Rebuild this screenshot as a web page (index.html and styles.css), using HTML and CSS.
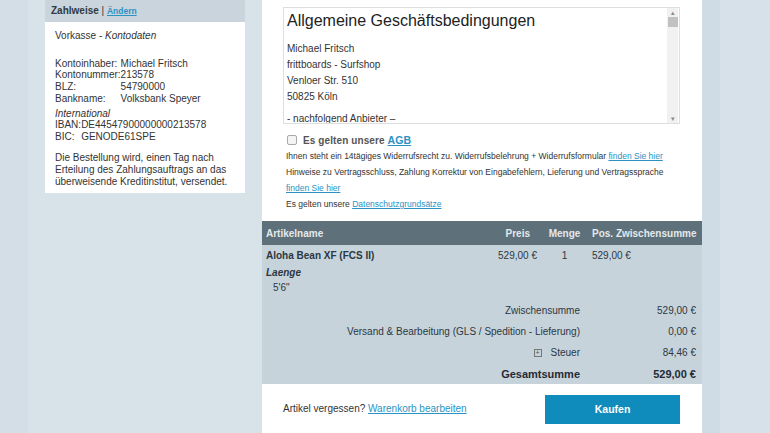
FILE: index.html
```html
<!DOCTYPE html>
<html lang="de">
<head>
<meta charset="utf-8">
<title>Kasse</title>
<link rel="stylesheet" href="styles.css">
</head>
<body>
<div class="page">
  <aside class="side">
    <div class="side-head"><b>Zahlweise</b> | <a href="#" class="small-link">Ändern</a></div>
    <div class="side-body">
      <p class="mode">Vorkasse - <i>Kontodaten</i></p>
      <table class="acct">
        <tr><td>Kontoinhaber:</td><td>Michael Fritsch</td></tr>
        <tr><td>Kontonummer:</td><td>213578</td></tr>
        <tr><td>BLZ:</td><td>54790000</td></tr>
        <tr><td>Bankname:</td><td>Volksbank Speyer</td></tr>
      </table>
      <p class="intl"><i>International</i></p>
      <table class="acct">
        <tr><td>IBAN:</td><td>DE44547900000000213578</td></tr>
        <tr><td>BIC:</td><td>GENODE61SPE</td></tr>
      </table>
      <p class="note">Die Bestellung wird, einen Tag nach Erteilung des Zahlungsauftrags an das überweisende Kreditinstitut, versendet.</p>
    </div>
  </aside>

  <main class="main">
    <section class="terms">
      <div class="agb-box">
        <div class="agb-text">
          <h1>Allgemeine Geschäftsbedingungen</h1>
          <p>Michael Fritsch<br>frittboards - Surfshop<br>Venloer Str. 510<br>50825 Köln</p>
          <p>- nachfolgend Anbieter –</p>
        </div>
        <div class="sbar">
          <span class="arr">▴</span>
          <span class="thumb"></span>
          <span class="track"></span>
          <span class="arr">▾</span>
        </div>
      </div>
      <label class="agb-check"><span class="cb"></span>Es gelten unsere <a href="#">AGB</a></label>
      <p class="info first">Ihnen steht ein 14tägiges Widerrufsrecht zu. Widerrufsbelehrung + Widerrufsformular <a href="#">finden Sie hier</a></p>
      <p class="info">Hinweise zu Vertragsschluss, Zahlung Korrektur von Eingabefehlern, Lieferung und Vertragssprache <a href="#">finden Sie hier</a></p>
      <p class="info">Es gelten unsere <a href="#">Datenschutzgrundsätze</a></p>
    </section>

    <section class="cart">
      <div class="row head">
        <span class="c-name">Artikelname</span>
        <span class="c-price">Preis</span>
        <span class="c-qty">Menge</span>
        <span class="c-sum">Pos. Zwischensumme</span>
      </div>
      <div class="row item">
        <span class="c-name"><b>Aloha Bean XF (FCS II)</b></span>
        <span class="c-price">529,00 €</span>
        <span class="c-qty">1</span>
        <span class="c-sum">529,00 €</span>
      </div>
      <div class="attr"><b><i>Laenge</i></b></div>
      <div class="attr-val">5'6"</div>
      <div class="totals">
        <div class="trow"><span class="tl">Zwischensumme</span><span class="tv">529,00 €</span></div>
        <div class="trow"><span class="tl">Versand &amp; Bearbeitung (GLS / Spedition - Lieferung)</span><span class="tv">0,00 €</span></div>
        <div class="trow"><span class="tl"><span class="plus">+</span>Steuer</span><span class="tv">84,46 €</span></div>
        <div class="trow grand"><span class="tl">Gesamtsumme</span><span class="tv">529,00 €</span></div>
      </div>
    </section>

    <section class="foot">
      <p>Artikel vergessen? <a href="#">Warenkorb bearbeiten</a></p>
      <button class="buy">Kaufen</button>
    </section>
  </main>
</div>
</body>
</html>
```

FILE: styles.css
```css
html, body {
  margin: 0;
  padding: 0;
}
body {
  width: 770px;
  height: 433px;
  overflow: hidden;
  font-family: "Liberation Sans", Arial, sans-serif;
  color: #333;
  background: linear-gradient(to right, #d3dee6 0 28px, #d8e2e9 28px 702px, #d0dce5 702px 720px, #d6e1e9 720px);
}
.page {
  display: flex;
  align-items: flex-start;
  padding-left: 45px;
  gap: 17px;
}
a { color: #2a93c4; }

/* sidebar */
.side {
  width: 200px;
  flex: none;
}
.side-head {
  background: #c9d4dc;
  height: 22px;
  line-height: 22px;
  padding-left: 6px;
  font-size: 10px;
  color: #2f3a42;
}
.small-link { font-size: 8.5px; font-weight: bold; }
.side-body {
  background: #fff;
  padding: 8px 10px 6px;
  height: 157px;
  font-size: 10px;
  line-height: 11.7px;
  color: #333;
}
.side-body p { margin: 0; }
.side-body .mode { margin-bottom: 16px; }
.acct {
  border-collapse: collapse;
  font-size: 10px;
  line-height: 11.7px;
}
.acct td { padding: 0; white-space: nowrap; }
.side-body .intl { margin-top: 3px; }
.side-body .note { margin-top: 9px; line-height: 12px; }

/* main */
.main {
  width: 440px;
  flex: none;
  background: #fff;
  height: 433px;
  display: flex;
  flex-direction: column;
}
.terms {
  padding: 7px 22px 0 21px;
  height: 214px;
}
.agb-box {
  border: 1px solid #dedede;
  height: 115px;
  display: flex;
  overflow: hidden;
}
.agb-text {
  flex: 1;
  padding: 3px 4px 0 3px;
  color: #333;
}
.agb-text h1 {
  font-size: 16px;
  font-weight: normal;
  margin: 0 0 10px;
  line-height: 20px;
  color: #222;
}
.agb-text p {
  margin: 0 0 6px;
  font-size: 10px;
  line-height: 16px;
}
.sbar {
  width: 11px;
  background: #f1f1f1;
  display: flex;
  flex-direction: column;
  align-items: center;
  margin-right: 1px;
}
.arr {
  font-size: 7px;
  line-height: 9px;
  color: #8a8a8a;
  height: 9px;
}
.thumb {
  width: 10px;
  height: 10px;
  background: #c1c1c1;
}
.track { flex: 1; }
.agb-check {
  display: flex;
  align-items: center;
  margin: 9px 0 0 4px;
  font-size: 10px;
  font-weight: bold;
  color: #555;
  height: 14px;
  letter-spacing: 0.1px;
  white-space: pre;
}
.agb-check a { font-weight: bold; font-size: 10.5px; }
.cb {
  width: 8px;
  height: 8px;
  border: 1px solid #a9a9a9;
  border-radius: 2px;
  background: #f4f4f4;
  margin-right: 6px;
}
.info {
  margin: 0 0 0 3px;
  font-size: 8.5px;
  line-height: 16px;
  color: #333;
}
.info.first { margin-top: 1px; }

/* cart */
.cart {
  background: #c7d3db;
  height: 163px;
  color: #2b3843;
  font-size: 10px;
}
.row {
  display: flex;
  align-items: center;
  padding: 0 6px 0 4px;
  white-space: nowrap;
}
.row.head {
  background: #5e7079;
  color: #e4e9ec;
  font-weight: bold;
  height: 24px;
  font-size: 10px;
}
.c-name { flex: 1; }
.c-price { width: 80px; text-align: right; }
.row.head .c-price { padding-right: 7px; width: 73px; }
.c-qty { width: 55px; text-align: center; }
.c-sum { width: 104px; }
.row.item { height: 20px; }
.attr {
  padding-left: 4px;
  height: 16px;
  line-height: 16px;
}
.attr-val {
  padding-left: 11px;
  height: 14px;
  line-height: 14px;
}
.totals {
  padding-top: 6px;
}
.trow {
  display: flex;
  justify-content: flex-end;
  height: 21px;
  line-height: 20px;
  padding-right: 6px;
}
.tl { text-align: right; }
.tv { width: 116px; text-align: right; }
.plus {
  display: inline-block;
  width: 6px;
  height: 6px;
  border: 1px solid #777;
  font-size: 7px;
  line-height: 6px;
  text-align: center;
  margin-right: 9px;
  vertical-align: 1px;
  color: #555;
}
.trow.grand {
  font-weight: bold;
  font-size: 11px;
  color: #1f2b34;
}

/* footer */
.foot {
  flex: 1;
  display: flex;
  align-items: center;
  justify-content: space-between;
  padding: 0 22px 0 21px;
}
.foot p {
  margin: 0;
  font-size: 10px;
  color: #333;
}
.buy {
  width: 135px;
  height: 29px;
  border: 0;
  background: #0f8cbc;
  color: #fff;
  font-family: "Liberation Sans", Arial, sans-serif;
  font-size: 10.5px;
  font-weight: bold;
  margin-top: 1px;
}
```
